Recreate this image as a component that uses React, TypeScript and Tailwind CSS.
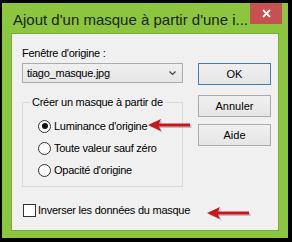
const font = { fontFamily: '"Liberation Sans", Arial, sans-serif' };

const Arrow = ({ className }: { className: string }) => (
  <svg className={className} width="46" height="16" viewBox="0 0 46 16">
    <g transform="translate(1.5,1.5)" fill="#9a9a9a" opacity="0.55">
      <polygon points="0,6 13,0 11,4.5 42,4.5 42,7.5 11,7.5 13,12" />
    </g>
    <polygon points="0,6 13,0 11,4.5 42,4.5 42,7.5 11,7.5 13,12" fill="#c8161d" />
  </svg>
);

const Radio = ({ label, checked }: { label: string; checked?: boolean }) => (
  <div className="flex h-[22px] items-center">
    <span className="flex h-[13px] w-[13px] shrink-0 items-center justify-center rounded-full border border-[#333] bg-white">
      {checked && <span className="h-[6px] w-[6px] rounded-full bg-[#111]" />}
    </span>
    <span className="ml-[3px] whitespace-nowrap text-[11px] leading-[14px] tracking-[-0.25px] text-black">
      {label}
    </span>
  </div>
);

const Btn = ({ label, def, className }: { label: string; def?: boolean; className?: string }) => (
  <button
    className={`flex h-[22px] w-[73px] items-center justify-center border bg-gradient-to-b from-[#f0f0f0] to-[#e5e5e5] text-[11px] text-black ${
      def ? 'border-[#3c7fb1]' : 'border-[#acacac]'
    } ${className ?? ''}`}
  >
    {label}
  </button>
);

export default function App() {
  return (
    <div className="relative h-[242px] w-[292px] bg-black pl-[2px] pt-[3px]" style={font}>
      <div className="flex h-[235px] w-[286px] flex-col bg-[#8cc63f]">
        <div className="flex h-[30px] items-start justify-between">
          <span className="whitespace-nowrap pl-[11px] pt-[8px] text-[15px] leading-[18px] text-[#1c2410]">
            Ajout d'un masque à partir d'une i...
          </span>
          <div className="mr-[6px] flex h-[21px] w-[32px] shrink-0 items-center justify-center bg-[#c75050]">
            <svg width="9" height="9" viewBox="0 0 9 9">
              <path d="M1 1L8 8M8 1L1 8" stroke="white" strokeWidth="1.8" />
            </svg>
          </div>
        </div>
        <div className="mx-[9px] flex h-[198px] border border-[#7aad38] bg-[#f0f0f0]">
          <div className="flex w-[172px] flex-col pl-[10px] pt-[12px]">
            <span className="text-[11px] leading-[14px] tracking-[-0.25px] text-black">Fenêtre d'origine :</span>
            <div className="mt-[3px] flex h-[20px] w-[161px] items-center justify-between border border-[#acacac] bg-gradient-to-b from-[#f0f0f0] to-[#e5e5e5] pl-[4px] pr-[6px]">
              <span className="text-[11px] leading-[14px] tracking-[-0.25px] text-black">tiago_masque.jpg</span>
              <svg width="7" height="5" viewBox="0 0 7 5">
                <path d="M0.5 0.5L3.5 3.5L6.5 0.5" stroke="#444" strokeWidth="1.2" fill="none" />
              </svg>
            </div>
            <fieldset className="mt-[12px] w-[161px] border border-[#d9d9d9] pb-[5px] pt-[6px]">
              <legend className="ml-[7px] whitespace-nowrap px-[2px] text-[11px] leading-[14px] tracking-[-0.25px] text-black">
                Créer un masque à partir de
              </legend>
              <div className="flex flex-col pl-[15px]">
                <Radio label="Luminance d'origine" checked />
                <Radio label="Toute valeur sauf zéro" />
                <Radio label="Opacité d'origine" />
              </div>
            </fieldset>
            <div className="mt-[16px] flex items-center pl-[1px]">
              <span className="h-[13px] w-[13px] shrink-0 border border-[#333] bg-white" />
              <span className="ml-[2px] whitespace-nowrap text-[11px] leading-[14px] tracking-[-0.25px] text-black">
                Inverser les données du masque
              </span>
            </div>
          </div>
          <div className="flex flex-col pl-[14px] pt-[29px]">
            <Btn label="OK" def />
            <Btn label="Annuler" className="mt-[10px]" />
            <Btn label="Aide" className="mt-[7px]" />
          </div>
        </div>
      </div>
      <Arrow className="absolute left-[148px] top-[119px]" />
      <Arrow className="absolute left-[207px] top-[207px]" />
    </div>
  );
}
